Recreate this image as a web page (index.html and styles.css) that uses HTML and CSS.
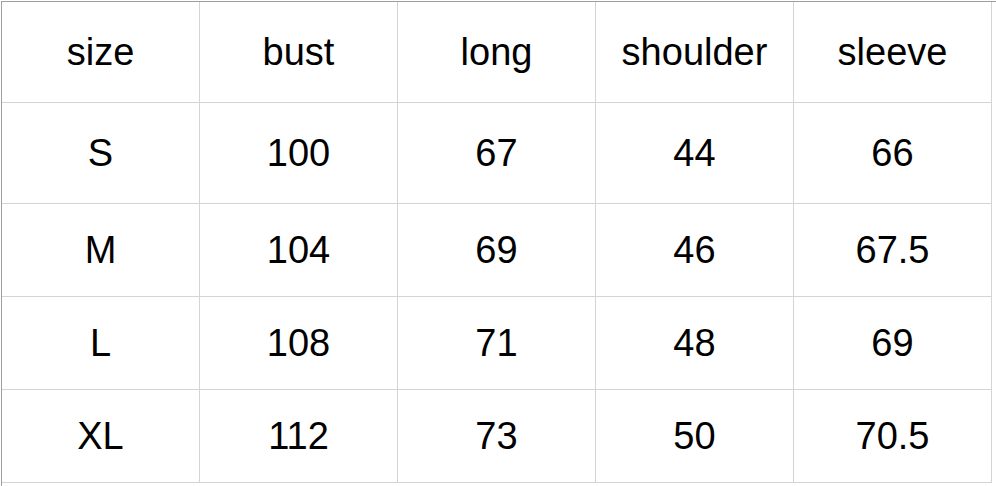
FILE: index.html
```html
<!DOCTYPE html>
<html>
<head>
<meta charset="utf-8">
<link rel="stylesheet" href="styles.css">
</head>
<body>
<div class="sheet">
  <div class="grid">
    <div class="cell head">size</div>
    <div class="cell head">bust</div>
    <div class="cell head">long</div>
    <div class="cell head">shoulder</div>
    <div class="cell head">sleeve</div>
    <div class="cell tall">S</div>
    <div class="cell tall">100</div>
    <div class="cell tall">67</div>
    <div class="cell tall">44</div>
    <div class="cell tall">66</div>
    <div class="cell">M</div>
    <div class="cell">104</div>
    <div class="cell">69</div>
    <div class="cell">46</div>
    <div class="cell">67.5</div>
    <div class="cell">L</div>
    <div class="cell">108</div>
    <div class="cell">71</div>
    <div class="cell">48</div>
    <div class="cell">69</div>
    <div class="cell">XL</div>
    <div class="cell">112</div>
    <div class="cell">73</div>
    <div class="cell">50</div>
    <div class="cell">70.5</div>
  </div>
</div>
</body>
</html>
```
FILE: styles.css
```css
html, body {
  margin: 0;
  padding: 0;
  background: #ffffff;
  overflow: hidden;
}
.sheet {
  margin: 1px 0 0 1px;
  border-top: 1px solid #9e9e9e;
  border-left: 1px solid #9e9e9e;
  height: 484px;
  background: #ffffff;
}
.grid {
  display: grid;
  grid-template-columns: repeat(5, 197px);
  grid-template-rows: 100px 100px 92px 92px 92px;
  gap: 1px;
  padding: 0 1px 1px 0;
  background: #d4d4d4;
  width: max-content;
}
.cell {
  background: #ffffff;
  display: flex;
  align-items: center;
  justify-content: center;
  font-family: "Liberation Sans", Arial, sans-serif;
  font-size: 38px;
  color: #000000;
}
```
